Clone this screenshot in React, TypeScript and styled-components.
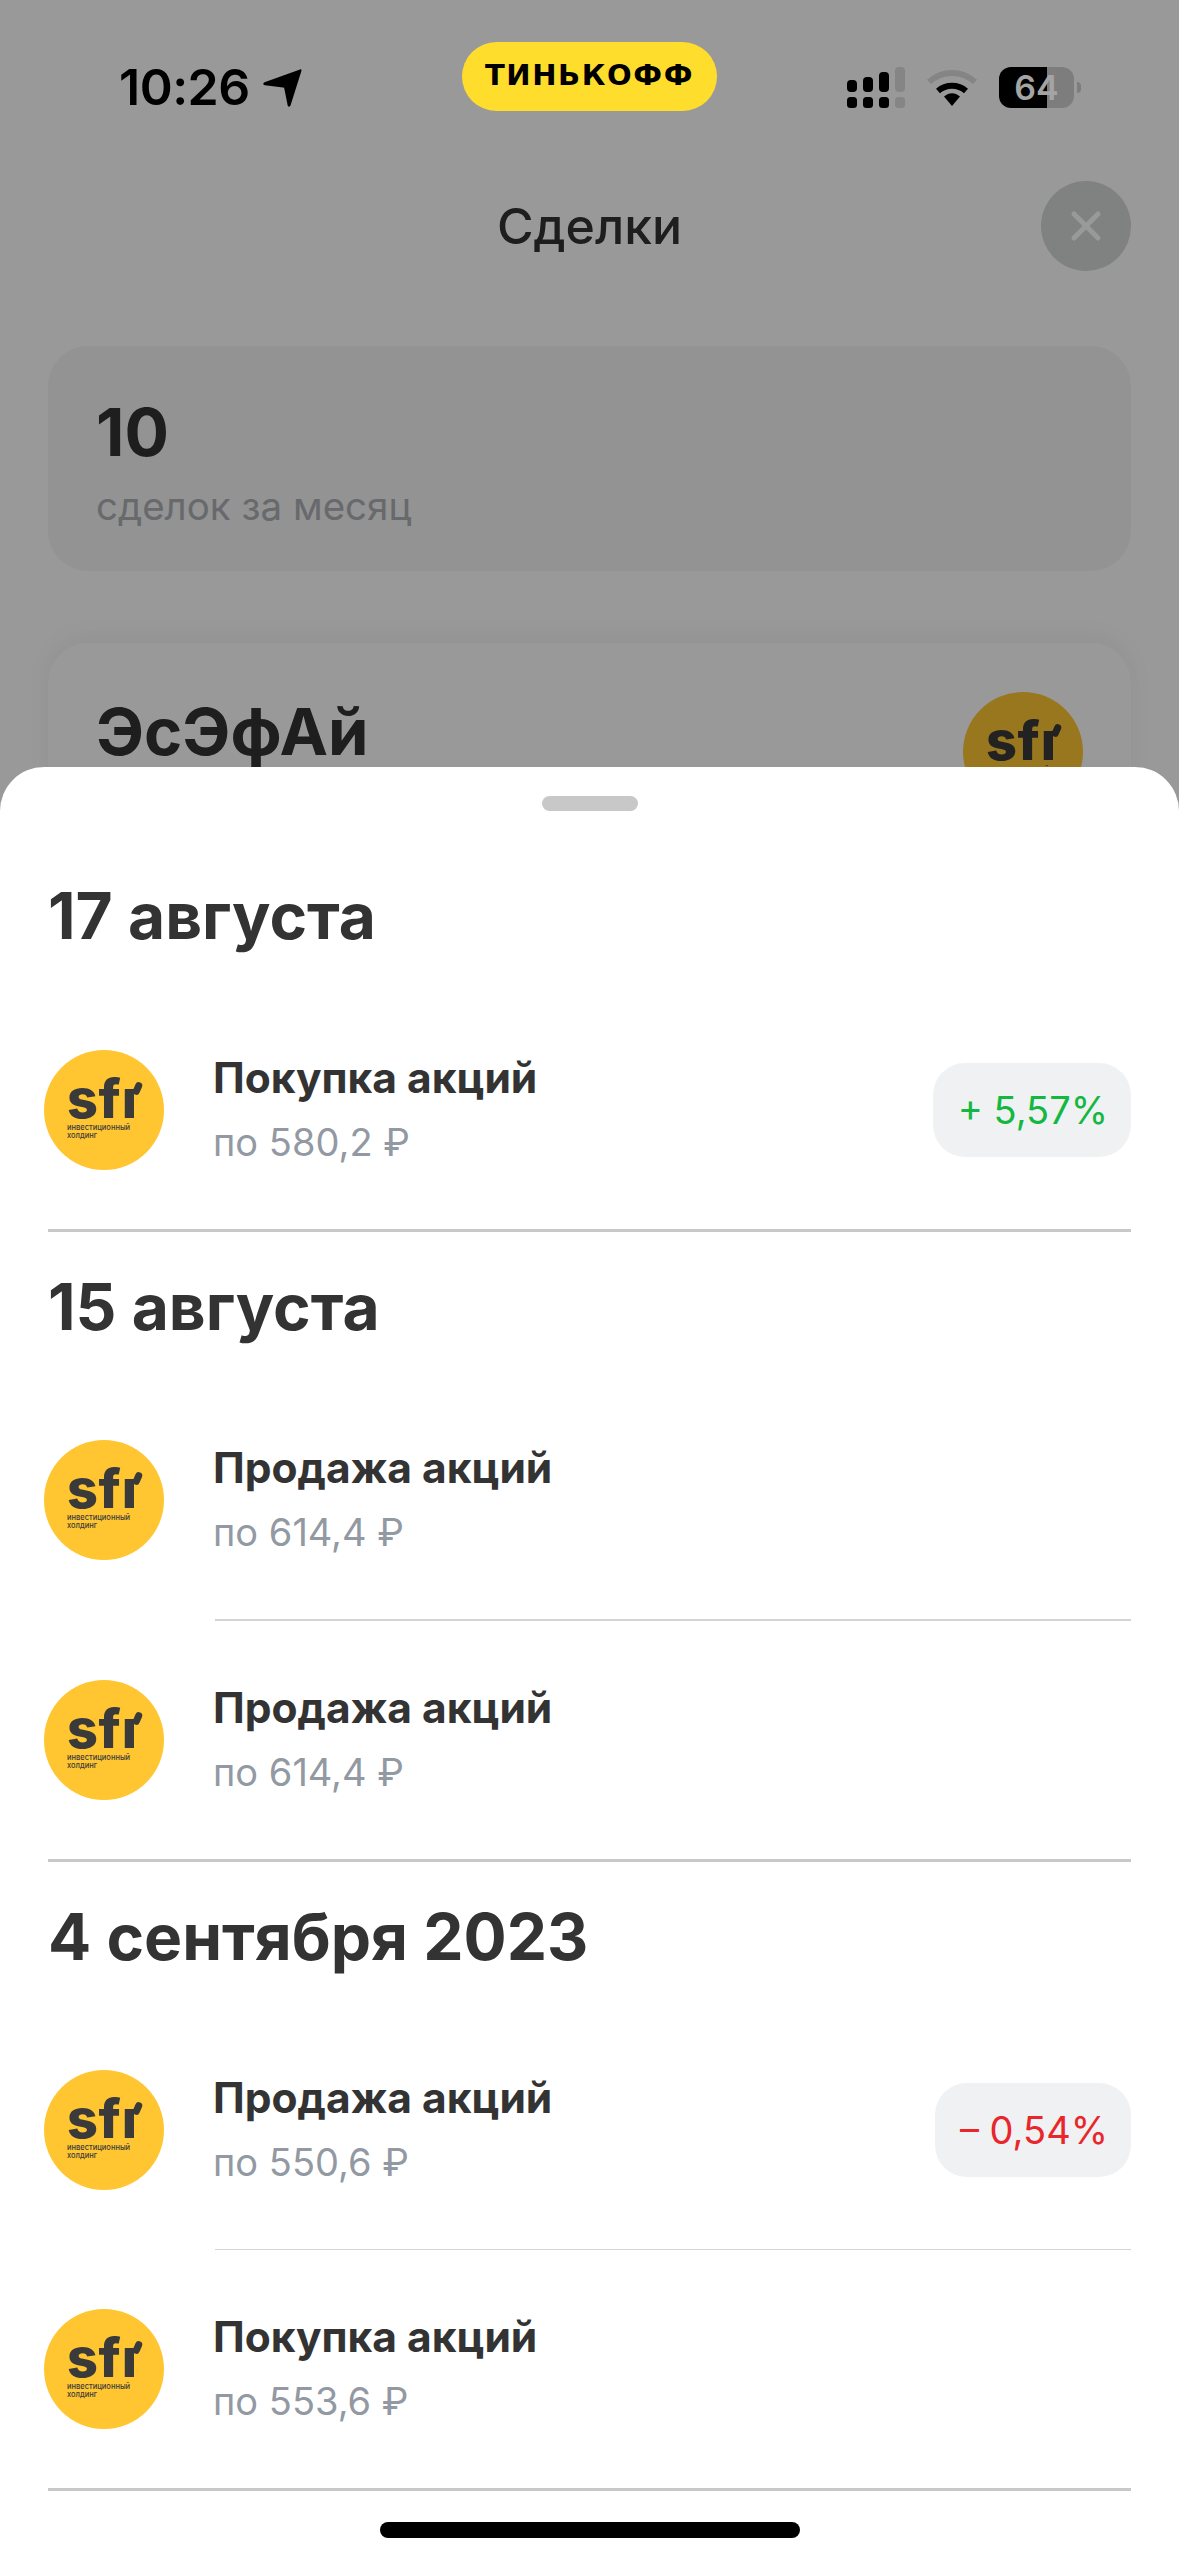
import React from 'react';
import styled, { createGlobalStyle } from 'styled-components';

const GlobalStyle = createGlobalStyle`
  html, body {
    margin: 0;
    padding: 0;
    background: #fff;
  }
  * {
    box-sizing: border-box;
  }
`;

const FONT = 'Inter, "Noto Sans", sans-serif';

const Screen = styled.div`
  position: relative;
  width: 1179px;
  height: 2556px;
  overflow: hidden;
  background: #fff;
  font-family: ${FONT};
  color: #333;
`;

/* page under the sheet */
const Page = styled.main`
  display: flex;
  flex-direction: column;
  padding: 181px 48px 0;
`;

const NavBar = styled.header`
  display: flex;
  align-items: center;
  justify-content: center;
  position: relative;
  height: 90px;
  margin-bottom: 75px;
`;

const NavTitle = styled.h1`
  margin: 0;
  font-size: 50px;
  font-weight: 500;
  color: #333;
`;

const CloseButton = styled.div`
  position: absolute;
  right: 0;
  top: 0;
  width: 90px;
  height: 90px;
  border-radius: 50%;
  background: #d6d7d8;
  display: flex;
  align-items: center;
  justify-content: center;
`;

const SummaryCard = styled.section`
  height: 225px;
  border-radius: 40px;
  background: #f5f5f6;
  padding: 53px 48px 0;
`;

const SummaryValue = styled.div`
  font-size: 66px;
  font-weight: 700;
  line-height: 66px;
  color: #333;
`;

const SummaryLabel = styled.div`
  margin-top: 17px;
  font-size: 38.5px;
  line-height: 48px;
  color: #acb0b4;
`;

const CompanyCard = styled.section`
  display: flex;
  justify-content: space-between;
  margin-top: 72px;
  height: 300px;
  padding: 49px 48px 0;
  border-radius: 40px;
  box-shadow: 0 -6px 24px rgba(0, 0, 0, 0.05);
`;

const CompanyName = styled.div`
  font-size: 65px;
  font-weight: 700;
  line-height: 80px;
  color: #333;
`;

const Dim = styled.div`
  position: absolute;
  inset: 0;
  background: rgba(0, 0, 0, 0.4);
`;

/* status bar sits on top of the dim layer */
const StatusBar = styled.div`
  position: absolute;
  top: 0;
  left: 0;
  right: 0;
  display: grid;
  grid-template-columns: 1fr auto 1fr;
  padding: 42px 98px 0;
`;

const TimeGroup = styled.div`
  display: flex;
  align-items: center;
  gap: 13px;
  height: 90px;
  padding-left: 21px;
`;

const Time = styled.span`
  font-size: 50px;
  font-weight: 600;
  color: #000;
  letter-spacing: -0.5px;
`;

const BankPill = styled.div`
  width: 255px;
  height: 69px;
  border-radius: 35px;
  background: #ffdd2d;
  display: flex;
  align-items: center;
  justify-content: center;
  padding-bottom: 4px;
  font-family: "DejaVu Sans", sans-serif;
  font-size: 29px;
  font-weight: 700;
  letter-spacing: 1.6px;
  color: #000;
`;

const Indicators = styled.div`
  display: flex;
  align-items: center;
  justify-content: flex-end;
  gap: 22px;
  height: 90px;
`;

const Battery = styled.div`
  position: relative;
  width: 75px;
  height: 41px;
  border-radius: 12px;
  overflow: hidden;
  display: flex;
  align-items: center;
  justify-content: center;
  background: linear-gradient(90deg, #000 64%, #7d7d7d 64%);
  font-size: 34px;
  font-weight: 600;
  color: #a4a4a4;
`;

const BatteryGroup = styled.div`
  display: flex;
  align-items: center;
  gap: 3px;
`;

const BatteryCap = styled.div`
  width: 4px;
  height: 11px;
  border-radius: 0 6px 6px 0;
  background: #7d7d7d;
`;

/* bottom sheet */
const Sheet = styled.section`
  position: absolute;
  left: 0;
  right: 0;
  top: 767px;
  bottom: 0;
  background: #fff;
  border-radius: 44px 44px 0 0;
  padding: 29px 48px 0;
`;

const Handle = styled.div`
  width: 96px;
  height: 15px;
  margin: 0 auto;
  border-radius: 8px;
  background: #c8c8c8;
`;

const DayGroup = styled.div`
  border-bottom: 3px solid #c8c8c8;
`;

const DayTitle = styled.h2<{ $first?: boolean }>`
  display: flex;
  align-items: center;
  margin: 0;
  height: ${({ $first }) => ($first ? '180px' : '149px')};
  padding-top: ${({ $first }) => ($first ? '28px' : '0')};
  font-size: 64px;
  font-weight: 700;
  color: #333;
`;

const Row = styled.div`
  position: relative;
  display: flex;
  align-items: center;
  height: 238px;
`;

const Separator = styled.div`
  height: 1.5px;
  margin-left: 167px;
  background: #d4d4d4;
`;

const RowText = styled.div`
  flex: 1;
  margin-left: 49px;
  display: flex;
  flex-direction: column;
  gap: 18px;
`;

const RowTitle = styled.div`
  font-size: 42.5px;
  font-weight: 700;
  line-height: 46px;
  color: #333;
`;

const RowPrice = styled.div`
  font-size: 38px;
  line-height: 46px;
  color: #9299a2;
`;

const Change = styled.div<{ $tone: 'up' | 'down' }>`
  display: flex;
  align-items: center;
  height: 94px;
  padding: 0 23px 0 25px;
  border-radius: 32px;
  background: #eff1f2;
  font-size: 38px;
  color: ${({ $tone }) => ($tone === 'up' ? '#12b83f' : '#e8262b')};
`;

const HomeIndicator = styled.div`
  position: absolute;
  left: 380px;
  bottom: 18px;
  width: 420px;
  height: 16px;
  border-radius: 8px;
  background: #000;
`;

/* sfi logo */
const LogoCircle = styled.div`
  position: relative;
  flex: none;
  width: 120px;
  height: 120px;
  margin-left: -4px;
  border-radius: 50%;
  background: #ffc632;
  padding: 26px 0 0 23px;
  color: #3a3a3a;
  overflow: hidden;
`;

const LogoMark = styled.div`
  font-size: 54px;
  font-weight: 800;
  line-height: 46px;
  letter-spacing: 0.5px;
`;

const LogoDrop = styled.span`
  position: absolute;
  left: 90px;
  top: 32px;
  width: 7px;
  height: 13px;
  border-radius: 4px;
  background: #3a3a3a;
  transform: rotate(24deg);
`;

const LogoCaption = styled.div`
  margin-top: 2px;
  font-size: 7.5px;
  font-weight: 500;
  line-height: 8px;
`;

const Logo = () => (
  <LogoCircle>
    <LogoMark>sfı</LogoMark>
    <LogoDrop />
    <LogoCaption>
      инвестиционный
      <br />
      холдинг
    </LogoCaption>
  </LogoCircle>
);

type Deal = { title: string; price: string; change?: string; tone?: 'up' | 'down' };

const days: { date: string; deals: Deal[] }[] = [
  { date: '17 августа', deals: [{ title: 'Покупка акций', price: 'по 580,2 ₽', change: '+ 5,57%', tone: 'up' }] },
  {
    date: '15 августа',
    deals: [
      { title: 'Продажа акций', price: 'по 614,4 ₽' },
      { title: 'Продажа акций', price: 'по 614,4 ₽' },
    ],
  },
  {
    date: '4 сентября 2023',
    deals: [
      { title: 'Продажа акций', price: 'по 550,6 ₽', change: '– 0,54%', tone: 'down' },
      { title: 'Покупка акций', price: 'по 553,6 ₽' },
    ],
  },
];

export default function App() {
  return (
    <Screen>
      <GlobalStyle />
      <Page>
        <NavBar>
          <NavTitle>Сделки</NavTitle>
          <CloseButton>
            <svg width="32" height="32" viewBox="0 0 32 32" fill="none" stroke="#fff" strokeWidth="5" strokeLinecap="round">
              <path d="M4 4l24 24M28 4L4 28" />
            </svg>
          </CloseButton>
        </NavBar>
        <SummaryCard>
          <SummaryValue>10</SummaryValue>
          <SummaryLabel>сделок за месяц</SummaryLabel>
        </SummaryCard>
        <CompanyCard>
          <CompanyName>ЭсЭфАй</CompanyName>
          <Logo />
        </CompanyCard>
      </Page>
      <Dim />
      <StatusBar>
        <TimeGroup>
          <Time>10:26</Time>
          <svg width="39" height="39" viewBox="0 0 39 39">
            <path d="M37 1.5C38 1 38.8 2 38.4 3L27.5 37.5C27 39 25 39 24.7 37.5L21.3 20.5C21.2 19.8 20.8 19.5 20 19.4L2 17.3C0 17 -0.3 15 1.5 14.2L37 1.5Z" fill="#000" />
          </svg>
        </TimeGroup>
        <BankPill>ТИНЬКОФФ</BankPill>
        <Indicators>
          <svg width="58" height="41" viewBox="0 0 58 41">
            <rect x="0" y="13" width="10" height="12" rx="4" fill="#000" />
            <rect x="16" y="10" width="10" height="15" rx="4" fill="#000" />
            <rect x="32" y="5" width="10" height="20" rx="4" fill="#000" />
            <rect x="48" y="0" width="10" height="25" rx="4" fill="#858585" />
            <rect x="0" y="30" width="10" height="11" rx="3.5" fill="#000" />
            <rect x="16" y="30" width="10" height="11" rx="3.5" fill="#000" />
            <rect x="32" y="30" width="10" height="11" rx="3.5" fill="#000" />
            <rect x="48" y="30" width="10" height="11" rx="3.5" fill="#858585" />
          </svg>
          <svg width="50" height="37" viewBox="0 0 50 37" fill="none">
            <path d="M2 13C15 1 35 1 48 13" stroke="#858585" strokeWidth="6" />
            <path d="M11 22C19 15 31 15 39 22" stroke="#000" strokeWidth="6" />
            <path d="M17 27.5C22 23 28 23 33 27.5L25 37Z" fill="#000" />
          </svg>
          <BatteryGroup>
            <Battery>64</Battery>
            <BatteryCap />
          </BatteryGroup>
        </Indicators>
      </StatusBar>
      <Sheet>
        <Handle />
        {days.map((day, i) => (
          <DayGroup key={day.date}>
            <DayTitle $first={i === 0}>{day.date}</DayTitle>
            {day.deals.map((deal, j) => (
              <React.Fragment key={j}>
                {j > 0 && <Separator />}
                <Row>
                  <Logo />
                  <RowText>
                    <RowTitle>{deal.title}</RowTitle>
                    <RowPrice>{deal.price}</RowPrice>
                  </RowText>
                  {deal.change && <Change $tone={deal.tone!}>{deal.change}</Change>}
                </Row>
              </React.Fragment>
            ))}
          </DayGroup>
        ))}
        <HomeIndicator />
      </Sheet>
    </Screen>
  );
}
